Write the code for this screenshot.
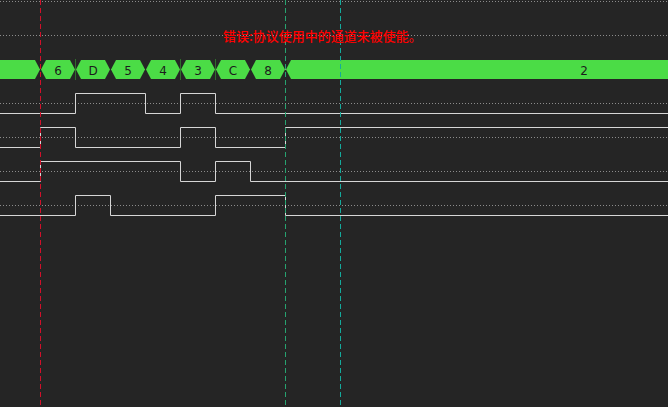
import React from 'react'

// step width of one sample on the time axis
const STEP = 35
const T0 = 40
const W = 668

const GRID_Y = [1, 35, 69, 103, 137, 171, 205]

// digital channels: y of the high level and the sample indexes where the level toggles
const CHANNELS: { top: number; edges: number[] }[] = [
  { top: 93, edges: [1, 3, 4, 5] },
  { top: 127, edges: [0, 1, 4, 5, 7] },
  { top: 161, edges: [0, 4, 5, 6] },
  { top: 195, edges: [1, 2, 5, 7] },
]

const BUS = ['6', 'D', '5', '4', '3', 'C', '8']

function wavePath(top: number, edges: number[]) {
  const hi = top + 0.5
  const lo = top + 20.5
  let high = false
  let d = `M0 ${lo}`
  for (const e of edges) {
    d += ` H${T0 + e * STEP + 0.5}`
    high = !high
    d += ` V${high ? hi : lo}`
  }
  return d + ` H${W}`
}

function hexPath(a: number, b: number) {
  return `M${a + 1} 69.5 L${a + 6} 60 H${b - 5} L${b} 69.5 L${b - 5} 79 H${a + 6} Z`
}

export default function App() {
  return (
    <div className="relative h-[407px] w-full overflow-hidden bg-[#252525]">
      <svg width={W} height={407} className="block">
        {GRID_Y.map(y => (
          <line key={y} x1={0} x2={W} y1={y + 0.5} y2={y + 0.5} stroke="#8c8c8c" strokeDasharray="1 2" />
        ))}

        {/* decoded bus */}
        <path d={`M0 60 H${T0 - 5} L${T0} 69.5 L${T0 - 5} 79 H0 Z`} fill="#4bdc46" />
        {BUS.map((v, i) => {
          const a = T0 + i * STEP
          return <path key={i} d={hexPath(a, a + STEP)} fill="#4bdc46" />
        })}
        <path d={`M${T0 + 7 * STEP + 1} 69.5 L${T0 + 7 * STEP + 6} 60 H${W} V79 H${T0 + 7 * STEP + 6} Z`} fill="#4bdc46" />
        {[75.5, 180.5, 215.5].map(x => (
          <line key={x} x1={x} x2={x} y1={59} y2={80} stroke="#2f6e2c" />
        ))}
        {BUS.map((v, i) => (
          <text
            key={i}
            x={T0 + i * STEP + STEP / 2 + 0.5}
            y={74.5}
            textAnchor="middle"
            fill="#1c1c1c"
            className="font-['DejaVu_Sans',sans-serif] text-[12px]"
          >
            {v}
          </text>
        ))}
        <text x={584} y={74.5} textAnchor="middle" fill="#1c1c1c" className="font-['DejaVu_Sans',sans-serif] text-[12px]">
          2
        </text>

        {/* channels */}
        {CHANNELS.map(c => (
          <path key={c.top} d={wavePath(c.top, c.edges)} fill="none" stroke="#d6d6d6" />
        ))}

        {/* cursors */}
        <line x1={40.5} x2={40.5} y1={0} y2={407} stroke="#d3102a" strokeDasharray="5 3" />
        <line x1={285.5} x2={285.5} y1={0} y2={407} stroke="#27a370" strokeDasharray="5 3" />
        <line x1={340.5} x2={340.5} y1={0} y2={407} stroke="#14aa9c" strokeDasharray="5 3" />
      </svg>

      <div className="absolute left-[223px] top-[27px] whitespace-nowrap font-['Noto_Sans_CJK_SC',sans-serif] text-[13px] font-medium leading-[18px] text-[#ff0000]">
        错误:协议使用中的通道未被使能。
      </div>
    </div>
  )
}
